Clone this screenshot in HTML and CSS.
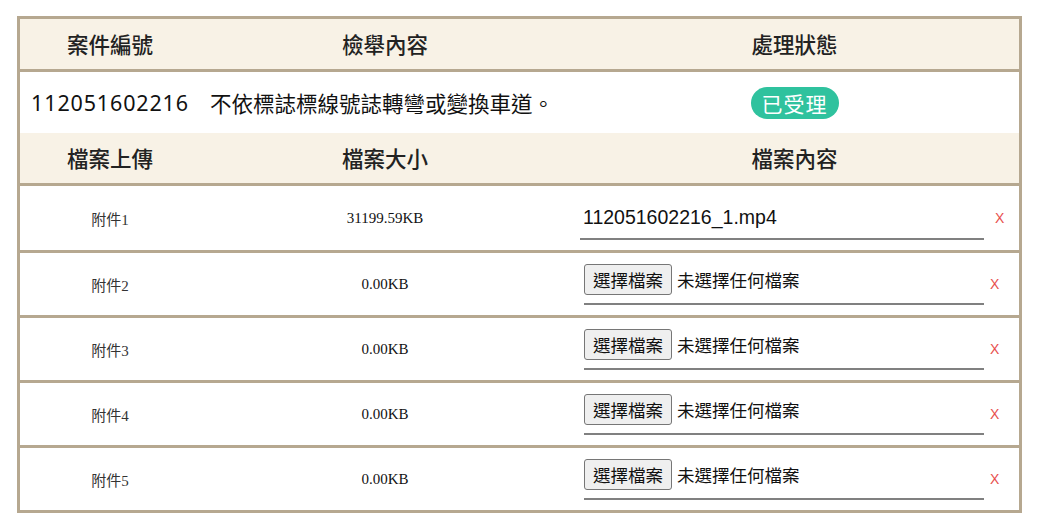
FILE: index.html
```html
<!DOCTYPE html>
<html lang="zh-Hant">
<head>
<meta charset="utf-8">
<link rel="stylesheet" href="styles.css">
</head>
<body>
<div class="page">
  <div class="box">
    <div class="row head">
      <div class="c c1">案件編號</div>
      <div class="c c2">檢舉內容</div>
      <div class="c c3">處理狀態</div>
    </div>
    <div class="row info">
      <div class="c c1 caseno">112051602216</div>
      <div class="c c2 desc">不依標誌標線號誌轉彎或變換車道。</div>
      <div class="c c3"><span class="badge">已受理</span></div>
    </div>
    <div class="row head head2">
      <div class="c c1">檔案上傳</div>
      <div class="c c2">檔案大小</div>
      <div class="c c3">檔案內容</div>
    </div>
    <div class="row file first">
      <div class="c c1 label">附件1</div>
      <div class="c c2 size">31199.59KB</div>
      <div class="c c3 filecell">
        <div class="field filled">112051602216_1.mp4</div>
        <span class="del">X</span>
      </div>
    </div>
    <div class="row file">
      <div class="c c1 label">附件2</div>
      <div class="c c2 size">0.00KB</div>
      <div class="c c3 filecell">
        <div class="field"><button class="pick">選擇檔案</button><span class="none">未選擇任何檔案</span></div>
        <span class="del">X</span>
      </div>
    </div>
    <div class="row file">
      <div class="c c1 label">附件3</div>
      <div class="c c2 size">0.00KB</div>
      <div class="c c3 filecell">
        <div class="field"><button class="pick">選擇檔案</button><span class="none">未選擇任何檔案</span></div>
        <span class="del">X</span>
      </div>
    </div>
    <div class="row file">
      <div class="c c1 label">附件4</div>
      <div class="c c2 size">0.00KB</div>
      <div class="c c3 filecell">
        <div class="field"><button class="pick">選擇檔案</button><span class="none">未選擇任何檔案</span></div>
        <span class="del">X</span>
      </div>
    </div>
    <div class="row file last">
      <div class="c c1 label">附件5</div>
      <div class="c c2 size">0.00KB</div>
      <div class="c c3 filecell">
        <div class="field"><button class="pick">選擇檔案</button><span class="none">未選擇任何檔案</span></div>
        <span class="del">X</span>
      </div>
    </div>
  </div>
</div>
</body>
</html>
```

FILE: styles.css
```css
html, body {
  margin: 0;
  padding: 0;
  background: #ffffff;
}
body {
  font-family: "Noto Sans CJK TC", "Noto Sans", sans-serif;
  color: #1a1a1a;
}
.page {
  padding: 16px 0 0 17px;
}
.box {
  width: 999px;
  border: 3px solid #b6a890;
}
.row {
  display: grid;
  grid-template-columns: 180px 370px 449px;
  align-items: center;
}
.c {
  text-align: center;
}
.head {
  height: 50px;
  background: #f8f2e6;
  font-size: 21.5px;
  font-weight: 500;
  color: #222;
}
.head .c {
  line-height: 50px;
}
.info {
  height: 61px;
  border-top: 3px solid #b6a890;
  background: #ffffff;
}
.caseno {
  font-family: "Noto Sans", "Noto Sans CJK TC", sans-serif;
  font-size: 21.5px;
  letter-spacing: 0.85px;
  color: #111;
}
.desc {
  text-align: left;
  padding-left: 10px;
  font-size: 21.5px;
  color: #111;
  white-space: nowrap;
}
.badge {
  display: inline-block;
  width: 88px;
  height: 32px;
  line-height: 32px;
  border-radius: 16px;
  background: #2fc29e;
  color: #ffffff;
  font-size: 21px;
  font-weight: 400;
  letter-spacing: 1px;
}
.head2 {
  border-bottom: 3px solid #b6a890;
}
.file {
  height: 62px;
  border-top: 3px solid #b6a890;
}
.file.first {
  height: 64px;
  border-top: 0;
}
.label {
  font-family: "Liberation Serif", "Noto Sans CJK TC", serif;
  font-size: 15px;
  color: #333;
}
.size {
  font-family: "Liberation Serif", serif;
  font-size: 15px;
  color: #111;
}
.filecell {
  display: flex;
  align-items: center;
  text-align: left;
}
.field {
  box-sizing: border-box;
  height: 43px;
  border-bottom: 2px solid #808080;
  display: flex;
  align-items: flex-start;
}
.field.filled {
  margin-left: 10px;
  width: 404px;
  padding: 9px 0 0 3px;
  font-family: "Liberation Sans", Arial, sans-serif;
  font-size: 19.5px;
  color: #111;
}
.file:not(.first) .field {
  margin-left: 14px;
  width: 400px;
  padding-top: 2px;
  margin-bottom: 2px;
}
.pick {
  box-sizing: border-box;
  width: 88px;
  height: 31px;
  margin: 0;
  padding: 0 6px;
  border: 1px solid #767676;
  border-radius: 3px;
  background: #efefef;
  font-family: "Noto Sans CJK TC", sans-serif;
  font-size: 17.5px;
  line-height: 29px;
  color: #111;
}
.none {
  margin-left: 5px;
  font-size: 17.5px;
  line-height: 31px;
  color: #111;
}
.del {
  font-family: "Liberation Sans", Arial, sans-serif;
  font-size: 14px;
  color: #e8504e;
  margin-left: 6px;
}
.first .del {
  margin-left: 11px;
}
```
